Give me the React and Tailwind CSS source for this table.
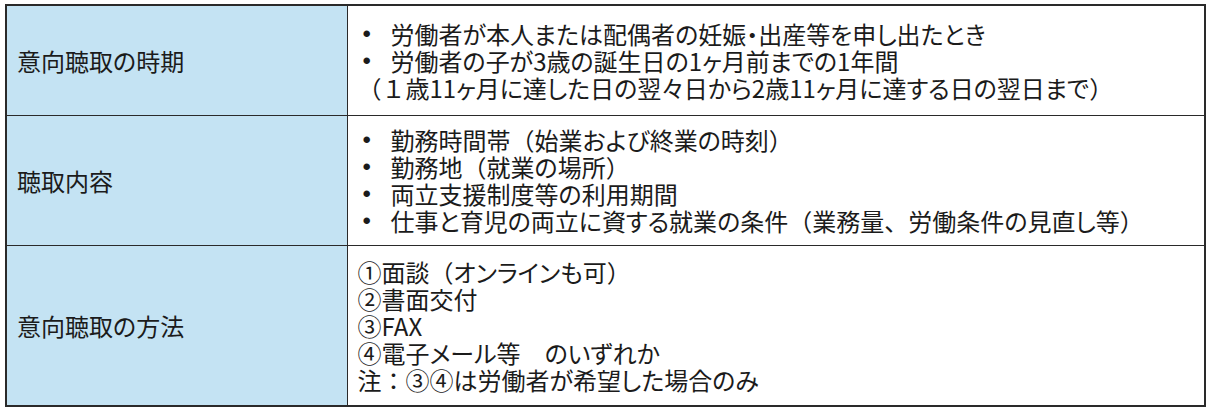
import React from "react";

const rows = [
  {
    label: "意向聴取の時期",
    height: "h-[110px]",
    bullets: [
      "労働者が本人または配偶者の妊娠・出産等を申し出たとき",
      "労働者の子が3歳の誕生日の1ヶ月前までの1年間",
    ],
    note: "（１歳11ヶ月に達した日の翌々日から2歳11ヶ月に達する日の翌日まで）",
  },
  {
    label: "聴取内容",
    height: "h-[130px]",
    bullets: [
      "勤務時間帯（始業および終業の時刻）",
      "勤務地（就業の場所）",
      "両立支援制度等の利用期間",
      "仕事と育児の両立に資する就業の条件（業務量、労働条件の見直し等）",
    ],
  },
  {
    label: "意向聴取の方法",
    height: "h-[161px]",
    lines: [
      "①面談（オンラインも可）",
      "②書面交付",
      "③FAX",
      "④電子メール等　のいずれか",
      "注：③④は労働者が希望した場合のみ",
    ],
  },
];

// kana are set proportional (palt), full-width punctuation keeps its full em
const wide = /^[（）、：　１]$/;

function Jp({ text }) {
  return text.split(/([（）、：　１])/).map((p, i) =>
    wide.test(p) ? (
      <span key={i} className="inline-block [font-feature-settings:normal]">
        {p}
      </span>
    ) : (
      p
    )
  );
}

function Bullet({ children }) {
  return (
    <li className="flex leading-[27px]">
      <span className="w-[33px] shrink-0 pl-[5px] font-['Liberation_Sans',sans-serif]">•</span>
      <div>
        <Jp text={children} />
      </div>
    </li>
  );
}

export default function App() {
  return (
    <div className="min-h-[413px] bg-white pl-[5px] pt-[4px] text-[#1b1b1b] font-['Noto_Sans_CJK_JP',sans-serif] text-[24px] [font-feature-settings:'palt']">
      <table className="w-[1201px] border-collapse border-2 border-[#2a2a2a]">
        <tbody>
          {rows.map((row) => (
            <tr key={row.label} className={row.height}>
              <td className="w-[341px] border border-[#2a2a2a] bg-[#c4e3f3] pl-[10px] align-middle leading-[27px]">
                {row.label}
              </td>
              <td className="border border-[#2a2a2a] pl-[10px] align-middle">
                {row.bullets && (
                  <ul>
                    {row.bullets.map((b) => (
                      <Bullet key={b}>{b}</Bullet>
                    ))}
                  </ul>
                )}
                {row.note && (
                  <div className="leading-[27px]">
                    <Jp text={row.note} />
                  </div>
                )}
                {row.lines && (
                  <div className="leading-[27px]">
                    {row.lines.map((l) => (
                      <div key={l}>
                        <Jp text={l} />
                      </div>
                    ))}
                  </div>
                )}
              </td>
            </tr>
          ))}
        </tbody>
      </table>
    </div>
  );
}
